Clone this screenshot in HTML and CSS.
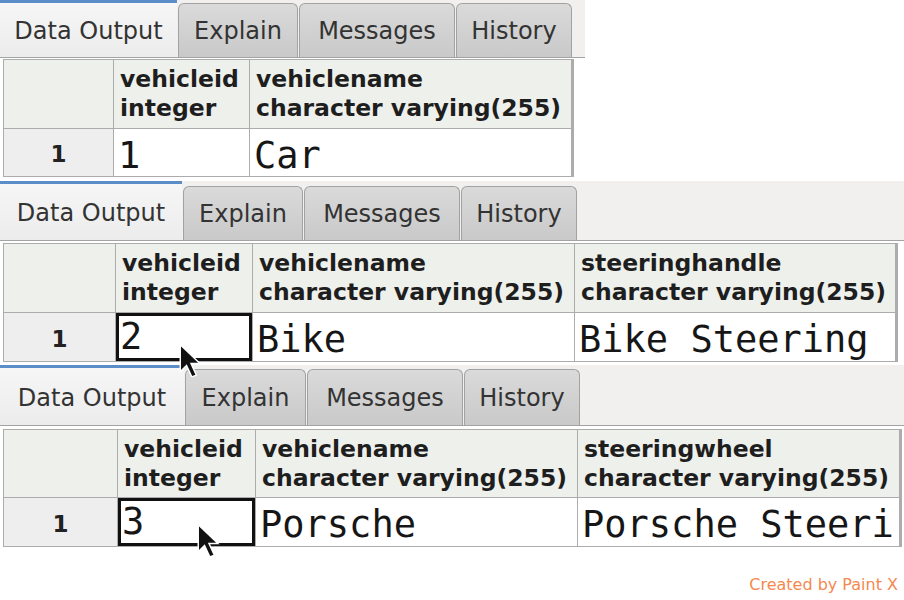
FILE: index.html
```html
<!DOCTYPE html>
<html lang="en">
<head>
    <meta charset="UTF-8">
    <meta name="viewport" content="width=device-width, initial-scale=1.0">
    <title>Data Output</title>
    <link rel="stylesheet" href="styles.css">
</head>
<body>
    <!-- first capture -->
    <div class="shot shot-1">
        <div class="tabbar">
            <div class="tab active">Data Output</div>
            <div class="tab">Explain</div>
            <div class="tab">Messages</div>
            <div class="tab">History</div>
        </div>
        <div class="grid">
            <div class="cell head"></div>
            <div class="cell head">vehicleid<br>integer</div>
            <div class="cell head">vehiclename<br>character varying(255)</div>
            <div class="cell rownum">1</div>
            <div class="cell data">1</div>
            <div class="cell data">Car</div>
        </div>
    </div>

    <!-- second capture -->
    <div class="shot shot-2">
        <div class="tabbar">
            <div class="tab active">Data Output</div>
            <div class="tab">Explain</div>
            <div class="tab">Messages</div>
            <div class="tab">History</div>
        </div>
        <div class="grid">
            <div class="cell head"></div>
            <div class="cell head">vehicleid<br>integer</div>
            <div class="cell head">vehiclename<br>character varying(255)</div>
            <div class="cell head">steeringhandle<br>character varying(255)</div>
            <div class="cell rownum">1</div>
            <div class="cell data sel">2</div>
            <div class="cell data">Bike</div>
            <div class="cell data">Bike Steering</div>
        </div>
        <svg class="pointer" width="26" height="34" viewBox="0 0 14 19">
            <path d="M1 1 L1 16 L4.5 12.5 L7.5 19 L10 18 L7 11.5 L12 11.5 Z" fill="#111" stroke="#fff" stroke-width="0.8"/>
        </svg>
    </div>

    <!-- third capture -->
    <div class="shot shot-3">
        <div class="tabbar">
            <div class="tab active">Data Output</div>
            <div class="tab">Explain</div>
            <div class="tab">Messages</div>
            <div class="tab">History</div>
        </div>
        <div class="grid">
            <div class="cell head"></div>
            <div class="cell head">vehicleid<br>integer</div>
            <div class="cell head">vehiclename<br>character varying(255)</div>
            <div class="cell head">steeringwheel<br>character varying(255)</div>
            <div class="cell rownum">1</div>
            <div class="cell data sel">3</div>
            <div class="cell data">Porsche</div>
            <div class="cell data">Porsche Steeri</div>
        </div>
        <svg class="pointer" width="26" height="34" viewBox="0 0 14 19">
            <path d="M1 1 L1 16 L4.5 12.5 L7.5 19 L10 18 L7 11.5 L12 11.5 Z" fill="#111" stroke="#fff" stroke-width="0.8"/>
        </svg>
    </div>

    <div class="credit">Created by Paint X</div>
</body>
</html>
```

FILE: styles.css
```css
body {
    margin: 0;
    padding: 0;
    background-color: white;
    font-family: "DejaVu Sans", Verdana, sans-serif;
    color: #222;
    width: 904px;
    height: 600px;
    overflow: hidden;
}

.shot {
    position: relative;
}

.tabbar {
    display: flex;
    align-items: flex-end;
    background-color: #f1f0ef;
    border-bottom: 1px solid #a3a3a3;
    box-sizing: border-box;
}

.tab {
    height: 54px;
    box-sizing: border-box;
    display: flex;
    align-items: center;
    justify-content: center;
    font-size: 24px;
    color: #333;
    background: linear-gradient(#dadada, #c9c9c9);
    border: 1px solid #a2a2a2;
    border-bottom: none;
    border-radius: 6px 6px 0 0;
    margin-right: 1px;
}

.tab.active {
    height: 100%;
    background: linear-gradient(#f6f6f6, #ececec);
    border: none;
    border-top: 3px solid #5b8ec6;
    border-radius: 0;
    padding-top: 2px;
}

.grid {
    display: grid;
    gap: 1px;
    padding: 1px;
    background-color: #acacac;
    margin-left: 3px;
}

.cell {
    background-color: white;
    box-sizing: border-box;
    white-space: nowrap;
    overflow: hidden;
}

.cell.head {
    background-color: #eef0ec;
    font-weight: bold;
    font-size: 23.5px;
    line-height: 29px;
    padding: 5px 0 0 6px;
    color: #1e1e1e;
}

.cell.rownum {
    background-color: #eeeeee;
    font-weight: bold;
    font-size: 23px;
    display: flex;
    align-items: center;
    justify-content: center;
    padding-top: 3px;
    color: #222;
}

.cell.data {
    font-family: "DejaVu Sans Mono", "Liberation Mono", monospace;
    font-size: 37px;
    line-height: 46px;
    padding: 4px 0 0 4px;
    color: #161616;
}

.cell.sel {
    border: 3px solid #111;
    padding: 1px 0 0 1px;
    line-height: 40px;
}

.pointer {
    position: absolute;
    z-index: 2;
}

/* capture 1 */
.shot-1 {
    height: 177px;
    width: 904px;
}

.shot-1 .tabbar {
    width: 585px;
    height: 58px;
}

.shot-1 .tab:nth-child(1) { width: 177px; }
.shot-1 .tab:nth-child(2) { width: 120px; }
.shot-1 .tab:nth-child(3) { width: 156px; }
.shot-1 .tab:nth-child(4) { width: 116px; }

.shot-1 .grid {
    width: 569px;
    margin-top: 1px;
    grid-template-columns: 109px 135px 321px;
    grid-template-rows: 68px 47px;
}

/* capture 2 */
.shot-2 {
    margin-top: 4px;
    height: 181px;
}

.shot-2 .tabbar {
    height: 60px;
}

.shot-2 .tab:nth-child(1) { width: 182px; }
.shot-2 .tab:nth-child(2) { width: 120px; }
.shot-2 .tab:nth-child(3) { width: 156px; }
.shot-2 .tab:nth-child(4) { width: 116px; }

.shot-2 .grid {
    width: 893px;
    margin-top: 2px;
    grid-template-columns: 111px 136px 321px 320px;
    grid-template-rows: 68px 48px;
}

.shot-2 .pointer {
    left: 178px;
    top: 162px;
}

/* capture 3 */
.shot-3 {
    margin-top: 3px;
    height: 182px;
}

.shot-3 .tabbar {
    height: 61px;
}

.shot-3 .tab:nth-child(1) { width: 184px; }
.shot-3 .tab:nth-child(2) { width: 121px; }
.shot-3 .tab:nth-child(3) { width: 156px; }
.shot-3 .tab:nth-child(4) { width: 116px; }

.shot-3 .tab {
    height: 56px;
}

.shot-3 .tab.active {
    height: 100%;
}

.shot-3 .grid {
    width: 897px;
    margin-top: 3px;
    grid-template-columns: 113px 137px 321px 321px;
    grid-template-rows: 67px 48px;
}

.shot-3 .pointer {
    left: 196px;
    top: 158px;
}

.credit {
    text-align: right;
    padding-right: 6px;
    margin-top: 28px;
    font-family: "DejaVu Sans", Verdana, sans-serif;
    font-size: 16px;
    color: #f5894f;
}
```
